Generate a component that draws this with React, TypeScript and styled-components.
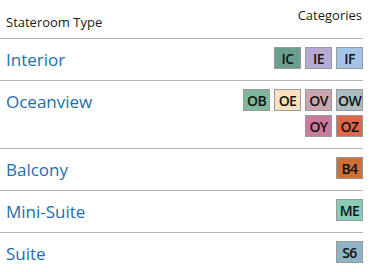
import React from 'react';
import styled, { createGlobalStyle } from 'styled-components';

const GlobalStyle = createGlobalStyle`
  html, body {
    margin: 0;
    padding: 0;
    background: #ffffff;
  }
  body {
    font-family: "Open Sans", "Liberation Sans", sans-serif;
  }
`;

type Category = { code: string; color: string };
type Stateroom = { name: string; categories: Category[] };

const staterooms: Stateroom[] = [
  {
    name: 'Interior',
    categories: [
      { code: 'IC', color: '#6b9e8f' },
      { code: 'IE', color: '#b5aad4' },
      { code: 'IF', color: '#a4c4e7' },
    ],
  },
  {
    name: 'Oceanview',
    categories: [
      { code: 'OB', color: '#7eb99b' },
      { code: 'OE', color: '#fbe1c0' },
      { code: 'OV', color: '#c7a6af' },
      { code: 'OW', color: '#aabdc3' },
      { code: 'OY', color: '#c97c9d' },
      { code: 'OZ', color: '#e0664a' },
    ],
  },
  { name: 'Balcony', categories: [{ code: 'B4', color: '#cd6f36' }] },
  { name: 'Mini-Suite', categories: [{ code: 'ME', color: '#87cbb9' }] },
  { name: 'Suite', categories: [{ code: 'S6', color: '#8fb4c3' }] },
];

const Table = styled.div`
  width: 363px;
`;

const HeaderRow = styled.div`
  display: flex;
  justify-content: space-between;
  height: 38px;
  border-bottom: 1px solid #b5b5b5;
  color: #1a1a1a;
  font-size: 13px;
`;

const HeaderName = styled.div`
  align-self: flex-end;
  padding: 0 0 7px 6px;
`;

const HeaderCategories = styled.div`
  padding: 6px 1px 0 0;
`;

const Row = styled.div`
  display: flex;
  justify-content: space-between;
  align-items: flex-start;
  padding: 8px 0 11px;
  border-bottom: 1px solid #b5b5b5;
`;

const RoomName = styled.div`
  padding: 4px 0 0 6px;
  color: #1d6db0;
  font-size: 17px;
  line-height: 18px;
`;

const Badges = styled.div`
  display: flex;
  flex-wrap: wrap;
  justify-content: flex-end;
  gap: 4px;
  width: 124px;
`;

const Badge = styled.span<{ $bg: string }>`
  display: inline-flex;
  align-items: center;
  justify-content: center;
  box-sizing: border-box;
  width: 27px;
  height: 22px;
  border: 1px solid #9a9a9a;
  background: ${(p) => p.$bg};
  color: #111;
  font-size: 14px;
  font-weight: 600;
  letter-spacing: -0.6px;
`;

const App = () => {
  return (
    <Table>
      <GlobalStyle />
      <HeaderRow>
        <HeaderName>Stateroom Type</HeaderName>
        <HeaderCategories>Categories</HeaderCategories>
      </HeaderRow>
      {staterooms.map((room) => (
        <Row key={room.name}>
          <RoomName>{room.name}</RoomName>
          <Badges>
            {room.categories.map((c) => (
              <Badge key={c.code} $bg={c.color}>
                {c.code}
              </Badge>
            ))}
          </Badges>
        </Row>
      ))}
    </Table>
  );
};

export default App;
